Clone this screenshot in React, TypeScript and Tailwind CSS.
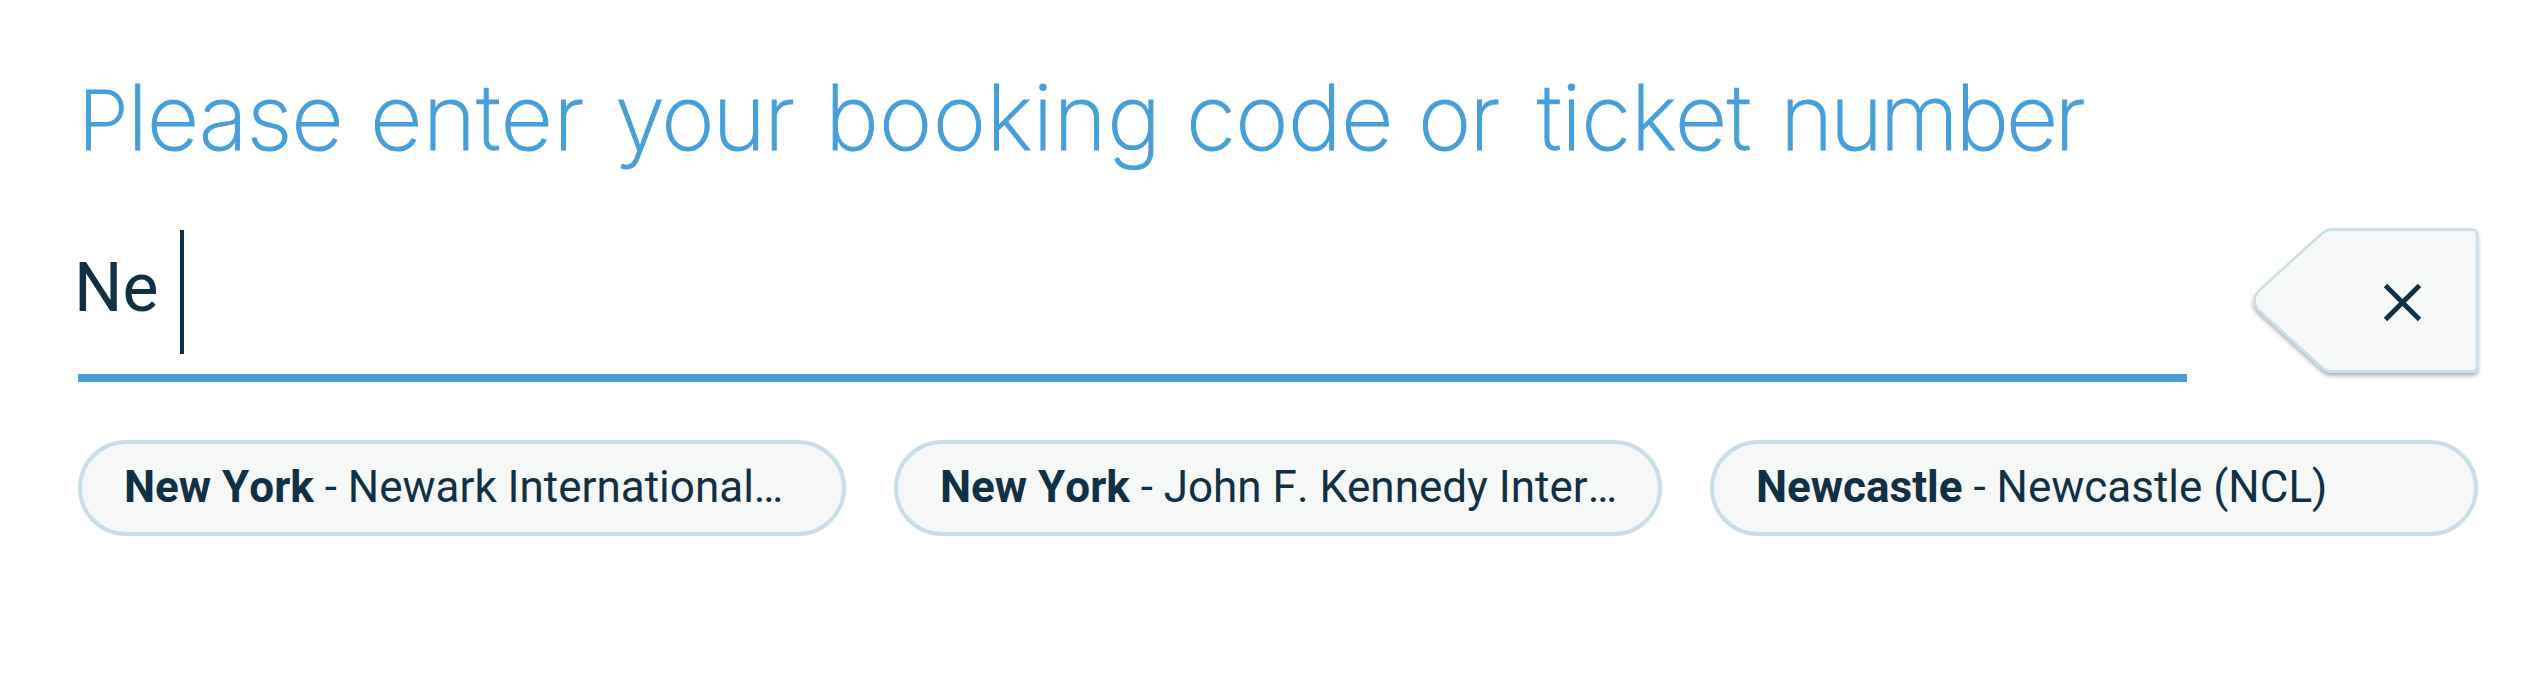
const heading = [
  { text: 'enter', style: 'w-[245px] tracking-[0.3px]' },
  { text: 'your', style: 'w-[210px] tracking-[-2px]' },
  { text: 'booking', style: 'w-[361px] tracking-[0.3px]' },
  { text: 'code', style: 'w-[232px] tracking-[-0.6px]' },
  { text: 'or', style: 'w-[119px] tracking-[-2px]' },
  { text: 'ticket', style: 'w-[243px] tracking-[-0.3px]' },
  { text: 'number', style: 'w-[320px] tracking-[-3.5px]' },
];

const suggestions = [
  { city: 'New York', airport: 'Newark International…' },
  { city: 'New York', airport: 'John F. Kennedy Inter…' },
  { city: 'Newcastle', airport: 'Newcastle (NCL)' },
];

function ClearButton() {
  return (
    <button aria-label="Clear" className="h-[160px] w-[240px]">
      <svg viewBox="2246 220 240 160" className="block h-full w-full">
        <defs>
          <filter id="shadow" x="-10%" y="-10%" width="120%" height="125%">
            <feDropShadow dx="0" dy="3" stdDeviation="2" floodColor="#000" floodOpacity="0.32" />
          </filter>
        </defs>
        <path
          d="M2332 229.5H2472Q2477 229.5 2477 234.5V366.5Q2477 371.5 2472 371.5H2332Q2326.500 371.5 2322 367.5L2259 310.500Q2250 301.500 2259 290.500L2322 233.500Q2326.500 229.500 2332 229.500Z"
          fill="#f6f8f7"
          stroke="#c8dee9"
          strokeWidth="2.4"
          filter="url(#shadow)"
        />
        <path d="M2385.500 285.500L2419.500 319.500M2419.500 285.500L2385.500 319.500" stroke="#113044" strokeWidth="4.800" fill="none" />
      </svg>
    </button>
  );
}

export default function App() {
  return (
    <main className="h-[688px] w-[2546px] bg-white pl-[78px] pt-[52px] font-['Roboto',sans-serif] text-[#113044]">
      <h1 className="flex h-[130px] items-baseline whitespace-nowrap font-['Inter',sans-serif] text-[91px] font-extralight leading-[130px] text-[#479fd9] [-webkit-text-stroke:1px_#479fd9]">
        <span className="w-[292px] tracking-[-1.2px]">
          <span className="text-[82px]">P</span>lease
        </span>
        {heading.map((word) => (
          <span key={word.text} className={word.style}>{word.text}</span>
        ))}
      </h1>

      <div className="mt-[38px] flex h-[162px] w-[2408px] justify-between">
        <div className="flex w-[2109px] border-b-8 border-[#479fd9] pt-[10px]">
          <span className="-ml-[4px] w-[106px] text-[68px] leading-[117px]">Ne</span>
          <span className="h-[124px] w-[4px] bg-[#113044]" />
        </div>
        <ClearButton />
      </div>

      <div className="mt-[58px] flex gap-[48px] [font-kerning:none]">
        {suggestions.map((item) => (
          <button
            key={item.airport}
            className="h-[96px] w-[768px] whitespace-nowrap rounded-full border-4 border-[#c8dee9] bg-[#f6f8f7] pb-[2px] pl-[42px] text-left text-[44px] leading-[86px]"
          >
            <b className="font-bold">{item.city}</b> - {item.airport}
          </button>
        ))}
      </div>
    </main>
  );
}
